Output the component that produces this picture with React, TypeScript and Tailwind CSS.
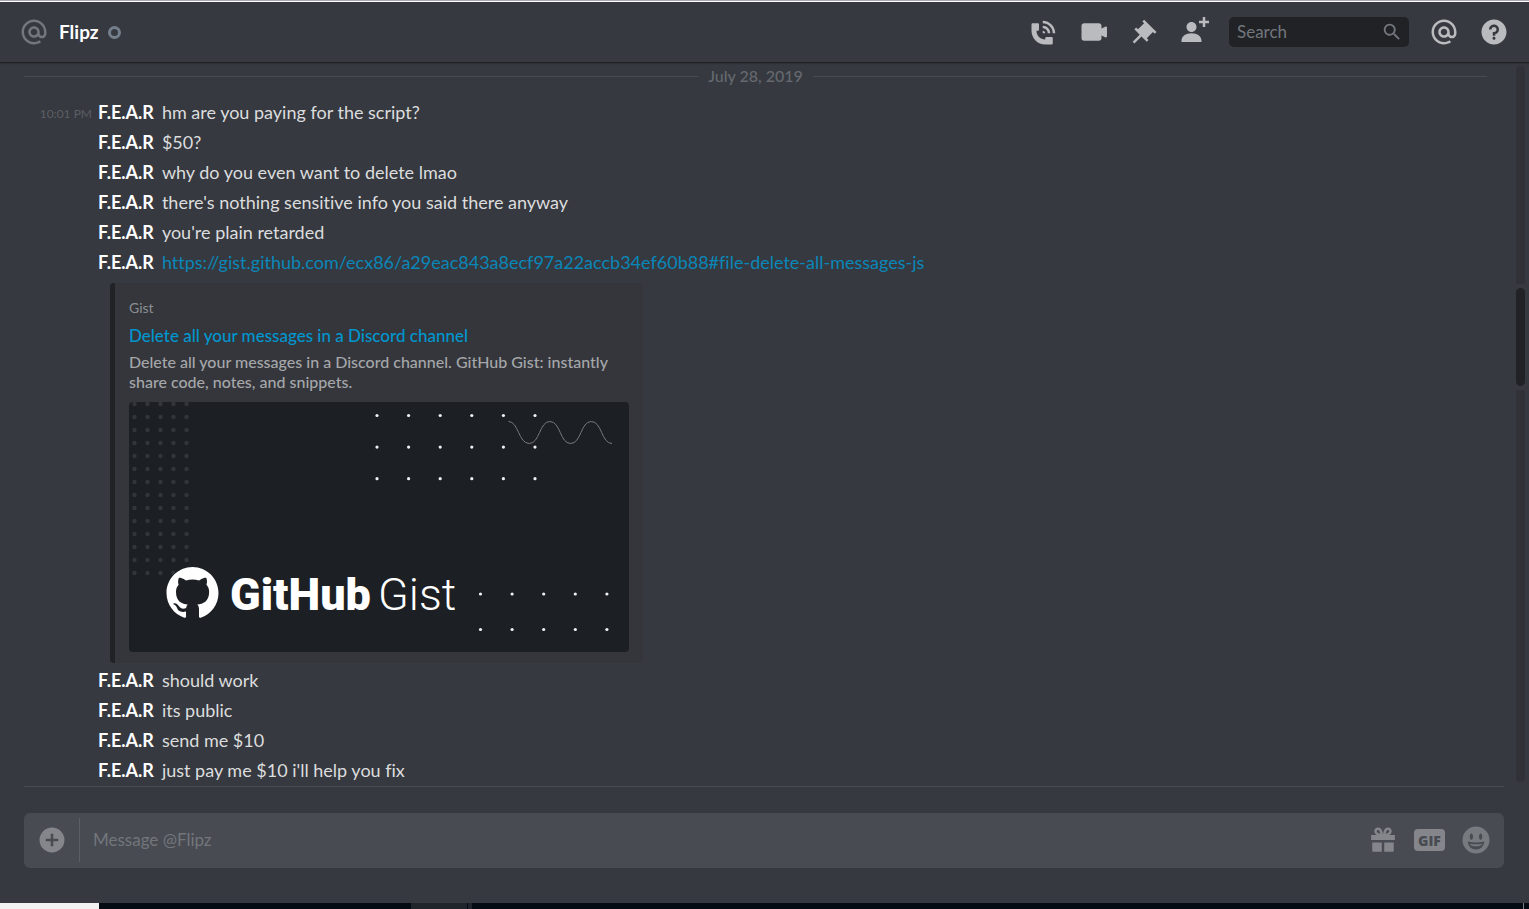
import type { ReactNode } from "react";
import clsx from "clsx";

type Message = {
  id: number;
  time?: string;
  author: string;
  text?: string;
  link?: string;
};

const beforeEmbed: Message[] = [
  { id: 1, time: "10:01 PM", author: "F.E.A.R", text: "hm are you paying for the script?" },
  { id: 2, author: "F.E.A.R", text: "$50?" },
  { id: 3, author: "F.E.A.R", text: "why do you even want to delete lmao" },
  { id: 4, author: "F.E.A.R", text: "there's nothing sensitive info you said there anyway" },
  { id: 5, author: "F.E.A.R", text: "you're plain retarded" },
  {
    id: 6,
    author: "F.E.A.R",
    link: "https://gist.github.com/ecx86/a29eac843a8ecf97a22accb34ef60b88#file-delete-all-messages-js",
  },
];

const afterEmbed: Message[] = [
  { id: 7, author: "F.E.A.R", text: "should work" },
  { id: 8, author: "F.E.A.R", text: "its public" },
  { id: 9, author: "F.E.A.R", text: "send me $10" },
  { id: 10, author: "F.E.A.R", text: "just pay me $10 i'll help you fix" },
];

const icons = {
  at: "M12 2C6.486 2 2 6.486 2 12C2 17.515 6.486 22 12 22C14.039 22 15.993 21.398 17.652 20.259L16.521 18.611C15.195 19.519 13.633 20 12 20C7.589 20 4 16.411 4 12C4 7.589 7.589 4 12 4C16.411 4 20 7.589 20 12V12.782C20 14.17 19.402 15 18.4 15L18.398 15.018C18.338 15.005 18.273 15 18.209 15H18C17.437 15 16.6 14.182 16.6 13.631V12C16.6 9.464 14.537 7.4 12 7.4C9.463 7.4 7.4 9.463 7.4 12C7.4 14.537 9.463 16.6 12 16.6C13.234 16.6 14.35 16.106 15.177 15.313C15.826 16.269 16.93 17 18 17L18.002 16.981C18.064 16.994 18.129 17 18.195 17H18.4C20.552 17 22 15.306 22 12.782V12C22 6.486 17.514 2 12 2ZM12 14.599C10.566 14.599 9.4 13.433 9.4 11.999C9.4 10.565 10.566 9.399 12 9.399C13.434 9.399 14.6 10.565 14.6 11.999C14.6 13.433 13.434 14.599 12 14.599Z",
  call: "M11 5V3C16.515 3 21 7.486 21 13H19C19 8.589 15.411 5 11 5ZM17 13H15C15 10.795 13.206 9 11 9V7C14.309 7 17 9.691 17 13ZM11 11V13H13C13 11.896 12.105 11 11 11ZM14 16H18C18.553 16 19 16.447 19 17V21C19 21.553 18.553 22 18 22H13C6.925 22 2 17.075 2 11V6C2 5.447 2.448 5 3 5H7C7.553 5 8 5.447 8 6V10C8 10.553 7.553 11 7 11H6C6.063 14.938 9 18 13 18V17C13 16.447 13.447 16 14 16Z",
  video:
    "M4 5H16C17.1 5 18 5.9 18 7V9.2L20.9 7.8C21.8 7.4 22.4 7.8 22.4 8.6V15.4C22.4 16.2 21.8 16.6 20.9 16.2L18 14.8V17C18 18.1 17.1 19 16 19H4C2.9 19 2 18.1 2 17V7C2 5.9 2.9 5 4 5Z",
  pin: "M22 12L12.101 2.101L10.686 3.514L12.101 4.929L7.151 9.878V9.88L5.736 8.465L4.322 9.88L8.565 14.122L2.908 19.778L4.322 21.192L9.979 15.536L14.222 19.778L15.636 18.364L14.222 16.95L19.171 12H19.172L20.586 13.414L22 12Z",
  addFriend:
    "M21 3H24V5H21V8H19V5H16V3H19V0H21V3ZM10 12C12.209 12 14 10.209 14 8C14 5.791 12.209 4 10 4C7.791 4 6 5.791 6 8C6 10.209 7.791 12 10 12ZM10 13C5.289 13 2 15.467 2 19V20H18V19C18 15.467 14.711 13 10 13Z",
  help: "M12 2C6.486 2 2 6.487 2 12C2 17.515 6.486 22 12 22C17.514 22 22 17.515 22 12C22 6.487 17.514 2 12 2ZM12 18.25C11.31 18.25 10.75 17.691 10.75 17C10.75 16.31 11.31 15.75 12 15.75C12.69 15.75 13.25 16.31 13.25 17C13.25 17.691 12.69 18.25 12 18.25ZM13 13.875V15H11V12H12C13.104 12 14 11.103 14 10C14 8.896 13.104 8 12 8C10.896 8 10 8.896 10 10H8C8 7.795 9.795 6 12 6C14.205 6 16 7.795 16 10C16 11.861 14.723 13.429 13 13.875Z",
  search:
    "M15.5 14H14.71L14.43 13.73A6.5 6.5 0 1 0 13.73 14.43L14 14.71V15.5L19 20.49L20.49 19L15.5 14ZM9.5 14A4.5 4.5 0 1 1 9.5 5A4.5 4.5 0 0 1 9.5 14Z",
  plus: "M12 2A10 10 0 1 0 12 22A10 10 0 0 0 12 2ZM17 13H13V17H11V13H7V11H11V7H13V11H17V13Z",
  gift: "M16.886 8H21.5V12H2.5V8H7.114C6.663 7.764 6.236 7.477 5.879 7.121C4.709 5.951 4.709 4.048 5.879 2.879C7.012 1.746 8.986 1.746 10.121 2.877C11.758 4.514 11.979 7.595 12 8C12.021 7.594 12.242 4.514 13.879 2.877C15.014 1.745 16.986 1.746 18.121 2.878C19.29 4.049 19.29 5.952 18.121 7.121C17.764 7.477 17.337 7.764 16.886 8ZM7.293 5.707C7.879 6.293 8.945 6.639 9.825 6.822C9.641 5.94 9.297 4.882 8.707 4.292C8.519 4.103 8.268 4 8 4C7.732 4 7.481 4.103 7.293 4.292C6.903 4.682 6.903 5.316 7.293 5.707ZM14.174 6.824C15.057 6.642 16.116 6.298 16.707 5.707C17.097 5.316 17.096 4.682 16.706 4.291C16.519 4.103 16.268 4 16 4C15.732 4 15.481 4.103 15.293 4.293C14.702 4.883 14.359 5.941 14.174 6.824ZM3.4 14V20.4C3.4 21 3.8 21.4 4.4 21.4H11V14H3.4ZM13 14V21.4H19.6C20.2 21.4 20.6 21 20.6 20.4V14H13Z",
  smile:
    "M12 1.2A10.8 10.8 0 1 0 12 22.8A10.8 10.8 0 0 0 12 1.2ZM8.3 6.7C9.1 6.7 9.6 7.8 9.6 9.2C9.6 10.6 9.1 11.7 8.3 11.7C7.5 11.7 7 10.6 7 9.2C7 7.8 7.5 6.7 8.3 6.7ZM15.7 6.7C16.5 6.7 17 7.8 17 9.2C17 10.6 16.5 11.7 15.7 11.7C14.9 11.7 14.4 10.6 14.4 9.2C14.4 7.8 14.9 6.7 15.7 6.7ZM12 19.6C8.4 19.6 5.8 17.2 5.4 13.2C9.4 14.3 14.6 14.3 18.6 13.2C18.2 17.2 15.6 19.6 12 19.6ZM7 14.9C7.6 16.3 9.6 17 12 17C14.4 17 16.4 16.3 17 14.9C13.8 15.5 10.2 15.5 7 14.9Z",
};

function Icon({ name, className }: { name: keyof typeof icons; className?: string }) {
  return (
    <svg viewBox="0 0 24 24" fill="currentColor" fillRule="evenodd" aria-hidden="true" className={clsx("shrink-0", className)}>
      <path d={icons[name]} />
    </svg>
  );
}

function IconButton({ label, children }: { label: string; children: ReactNode }) {
  return (
    <button type="button" aria-label={label} className="flex shrink-0 cursor-pointer">
      {children}
    </button>
  );
}

function Header() {
  return (
    <header className="z-10 flex h-[60px] shrink-0 items-center bg-[#36393f] pr-5 pl-[19px] shadow-[0_1px_0_#202225,0_2px_1px_#2f3136]">
      <Icon name="at" className="size-[30px] text-[#72767d]" />
      <h1 className="ml-[10px] text-[19px] font-bold text-white">Flipz</h1>
      <span className="ml-[9px] size-[13px] rounded-full border-[3px] border-[#747f8d]" />
      <div className="ml-auto flex items-center gap-5 text-[#b9bbbe]">
        <IconButton label="Start voice call">
          <Icon name="call" className="size-[30px]" />
        </IconButton>
        <IconButton label="Start video call">
          <Icon name="video" className="size-[30px]" />
        </IconButton>
        <IconButton label="Pinned messages">
          <Icon name="pin" className="size-[30px]" />
        </IconButton>
        <IconButton label="Add friends">
          <Icon name="addFriend" className="size-[30px]" />
        </IconButton>
        <label className="flex h-[30px] w-[180px] items-center rounded-[5px] bg-[#202225] pr-[6px] pl-2 text-[#72767d]">
          <input
            type="text"
            aria-label="Search"
            placeholder="Search"
            className="min-w-0 flex-1 bg-transparent text-[17px] outline-none placeholder:text-[#72767d]"
          />
          <Icon name="search" className="size-[22px]" />
        </label>
        <IconButton label="Mentions">
          <Icon name="at" className="size-[30px]" />
        </IconButton>
        <IconButton label="Help">
          <Icon name="help" className="size-[30px]" />
        </IconButton>
      </div>
    </header>
  );
}

function MessageRow({ message }: { message: Message }) {
  return (
    <li className="flex h-[30px] items-center pb-[2px] whitespace-nowrap">
      <time className="w-[92px] shrink-0 pt-1 text-right text-[12px] text-[#5b5e64]">{message.time}</time>
      <span className="ml-[6px] text-[18px] font-bold text-white">{message.author}</span>
      {message.link ? (
        <a href={message.link} className="ml-2 text-[18px] text-[#0a87b9]">
          {message.link}
        </a>
      ) : (
        <span className="ml-2 text-[18px] text-[#dcddde]">{message.text}</span>
      )}
    </li>
  );
}

function Dots({ x, y, dx, dy, cols, rows, r }: { x: number; y: number; dx: number; dy: number; cols: number; rows: number; r: number }) {
  return (
    <>
      {Array.from({ length: cols * rows }, (_, i) => (
        <circle key={i} cx={x + (i % cols) * dx} cy={y + Math.floor(i / cols) * dy} r={r} />
      ))}
    </>
  );
}

function GistPreview() {
  return (
    <svg viewBox="0 0 500 250" role="img" aria-label="GitHub Gist" className="mt-[10px] w-full rounded-[4px] bg-[#1c1f23]">
      <g fill="#32363b">
        <Dots x={5.5} y={2} dx={13} dy={13} cols={5} rows={14} r={2.2} />
      </g>
      <g fill="#f0f1f2">
        <Dots x={248} y={13.5} dx={31.6} dy={31.6} cols={6} rows={3} r={1.6} />
        <Dots x={351.5} y={192} dx={31.6} dy={35.5} cols={5} rows={2} r={1.6} />
      </g>
      <path
        d="M379.5 19.5c10 0 10 22 20.7 22s10-22 20.7-22s10 22 20.7 22s10-22 20.7-22s10 22 20.7 22"
        fill="none"
        stroke="#777b80"
      />
      <circle cx="63.5" cy="191" r="27" fill="#1c1f23" />
      <path
        transform="translate(37.5 165) scale(3.25)"
        fill="#fff"
        d="M8 0C3.58 0 0 3.58 0 8c0 3.54 2.29 6.53 5.47 7.59.4.07.55-.17.55-.38 0-.19-.01-.82-.01-1.49-2.01.37-2.53-.49-2.69-.94-.09-.23-.48-.94-.82-1.13-.28-.15-.68-.52-.01-.53.63-.01 1.08.58 1.23.82.72 1.21 1.87.87 2.33.66.07-.52.28-.87.51-1.07-1.78-.2-3.64-.89-3.64-3.95 0-.87.31-1.59.82-2.15-.08-.2-.36-1.02.08-2.12 0 0 .67-.21 2.2.82.64-.18 1.32-.27 2-.27s1.36.09 2 .27c1.53-1.04 2.2-.82 2.2-.82.44 1.1.16 1.92.08 2.12.51.56.82 1.27.82 2.15 0 3.07-1.87 3.75-3.65 3.95.29.25.54.73.54 1.48 0 1.07-.01 1.93-.01 2.2 0 .21.15.46.55.38A8.01 8.01 0 0 0 16 8c0-4.42-3.58-8-8-8Z"
      />
      <text x="101" y="208" fill="#fff" className="font-[Roboto,sans-serif] text-[45px] font-black">
        GitHub
      </text>
      <text x="249" y="208" fill="#fff" className="font-[Roboto,sans-serif] text-[45px] font-light">
        Gist
      </text>
    </svg>
  );
}

function Embed() {
  return (
    <li className="mt-[5px] mb-[3px] ml-[110px] w-[533px] rounded-[4px] border-l-[5px] border-[#202225] bg-[#34363b] px-[14px] pt-4 pb-[11px]">
      <p className="text-[14px] leading-[18px] text-[#8a8e94]">Gist</p>
      <a href="https://gist.github.com" className="mt-[7px] block text-[17px] leading-6 font-medium text-[#0096cf]">
        Delete all your messages in a Discord channel
      </a>
      <p className="mt-[4px] text-[16px] leading-5 font-medium text-[#a5a7aa]">
        Delete all your messages in a Discord channel. GitHub Gist: instantly share code, notes, and snippets.
      </p>
      <GistPreview />
    </li>
  );
}

function Messages() {
  return (
    <main className="flex min-h-0 flex-1">
      <div className="flex min-w-0 flex-1 flex-col justify-end overflow-hidden">
        <div className="mr-[29px] ml-6 flex items-center gap-[10px] text-[16px] leading-6 font-medium text-[#65696f]">
          <hr className="flex-1 border-[#484b51]" />
          July 28, 2019
          <hr className="flex-1 border-[#484b51]" />
        </div>
        <ul className="mt-[10px]">
          {beforeEmbed.map((message) => (
            <MessageRow key={message.id} message={message} />
          ))}
          <Embed />
          {afterEmbed.map((message) => (
            <MessageRow key={message.id} message={message} />
          ))}
        </ul>
      </div>
      {/* scrollbar */}
      <div className="mt-[4px] mr-[4px] mb-[4px] flex w-[9px] flex-col gap-[4px]">
        <div className="h-[218px] rounded-t-[4px] bg-[#303237]" />
        <div className="h-[98px] rounded-full bg-[#202225]" />
        <div className="flex-1 rounded-b-[4px] bg-[#303237]" />
      </div>
    </main>
  );
}

function Composer() {
  return (
    <form className="mr-[25px] ml-6 shrink-0 border-t border-[#484b51] pt-[26px] pb-[35px]">
      <div className="flex h-[55px] items-center rounded-[6px] bg-[#484b52] px-[13px] pb-px text-[#84868b]">
        <IconButton label="Upload a file">
          <Icon name="plus" className="size-[30px]" />
        </IconButton>
        <span className="ml-3 h-11 w-px bg-[#5b5e65]" />
        <input
          type="text"
          aria-label="Message @Flipz"
          placeholder="Message @Flipz"
          className="ml-[13px] min-w-0 flex-1 bg-transparent text-[17px] outline-none placeholder:text-[#72767b]"
        />
        <div className="flex items-center gap-4">
          <IconButton label="Send a gift">
            <Icon name="gift" className="size-[30px]" />
          </IconButton>
          <button
            type="button"
            className="flex h-[22px] w-[31px] cursor-pointer items-center justify-center rounded-[4px] bg-[#84868b] font-['Open_Sans'] text-[14px] font-extrabold text-[#484b52]"
          >
            GIF
          </button>
          <IconButton label="Pick an emoji">
            <Icon name="smile" className="size-[30px] text-[#777a7f]" />
          </IconButton>
        </div>
      </div>
    </form>
  );
}

export default function App() {
  return (
    <div className="flex h-screen flex-col bg-[#36393f] font-[Lato,sans-serif] [font-variant-ligatures:none]">
      <div className="h-[2px] shrink-0 border-t border-[#a9aab6] bg-white" />
      <Header />
      <Messages />
      <Composer />
      {/* strip of the desktop taskbar */}
      <footer className="flex h-[6px] shrink-0 bg-[#050b13]">
        <div className="w-[99px] bg-[#f2f2f2]" />
        <div className="ml-[312px] w-14 bg-[#20252c]" />
        <div className="ml-px w-1 bg-[#20252c]" />
        <div className="mr-[5px] ml-auto w-px bg-[#7d8086]" />
      </footer>
    </div>
  );
}
